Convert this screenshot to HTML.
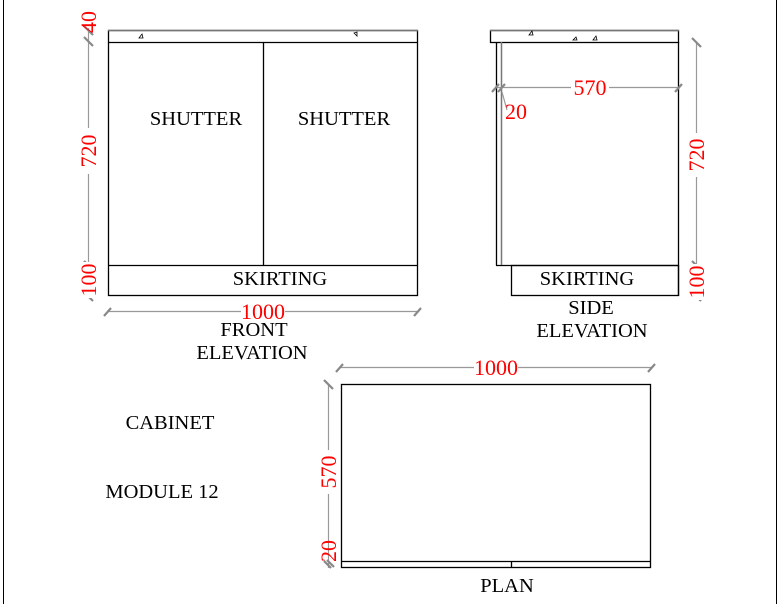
<!DOCTYPE html>
<html><head><style>
html,body{margin:0;padding:0;background:#fff;}
svg{display:block;}
text{font-family:"Liberation Serif","Times New Roman",serif;}
.k{fill:#000;font-size:20.5px;}
.r{fill:#f00;font-size:22px;}
</style></head><body>
<svg width="779" height="604" viewBox="0 0 779 604" xmlns="http://www.w3.org/2000/svg">
<rect x="0" y="0" width="779" height="604" fill="#fff"/>
<line x1="3.5" y1="0" x2="3.5" y2="604" stroke="#000" stroke-width="1"/>
<line x1="776.5" y1="0" x2="776.5" y2="604" stroke="#000" stroke-width="1"/>

<!-- FRONT -->
<g stroke="#000" stroke-width="1.3" fill="none">
<rect x="108.5" y="30.5" width="309" height="265"/>
<line x1="108" y1="42.5" x2="418" y2="42.5"/>
<line x1="263.5" y1="42" x2="263.5" y2="265"/>
<line x1="108" y1="265.5" x2="418" y2="265.5"/>
</g>
<line x1="108" y1="30.5" x2="418" y2="30.5" stroke="#777" stroke-width="1.5"/>
<path d="M139 38 l3 -4 l1 4 z M354 33 l3 3 l0 -4 z" stroke="#000" stroke-width="0.8" fill="none"/>
<text class="k" x="196" y="125" text-anchor="middle">SHUTTER</text>
<text class="k" x="344" y="125" text-anchor="middle">SHUTTER</text>
<text class="k" x="280" y="285" text-anchor="middle">SKIRTING</text>
<text class="k" x="254" y="336" text-anchor="middle">FRONT</text>
<text class="k" x="252" y="359" text-anchor="middle">ELEVATION</text>

<g stroke="#999" stroke-width="1.2">
<line x1="88.5" y1="28" x2="88.5" y2="298"/>
<line x1="107" y1="311.5" x2="417" y2="311.5"/>
</g>
<g stroke="#888" stroke-width="2.2">
<line x1="84" y1="26" x2="93" y2="35"/><line x1="84" y1="37" x2="93" y2="46"/>
<line x1="84" y1="261" x2="93" y2="270"/><line x1="84" y1="292" x2="93" y2="301"/>
<line x1="104" y1="316" x2="111" y2="308"/><line x1="414" y1="316" x2="421" y2="308"/>
</g>
<rect x="241" y="302" width="44" height="18" fill="#fff"/>
<text class="r" x="263" y="319" text-anchor="middle">1000</text>
<rect x="80" y="128" width="18" height="46" fill="#fff"/>
<text class="r" transform="translate(96,151) rotate(-90)" text-anchor="middle">720</text>
<text class="r" transform="translate(96,22) rotate(-90)" text-anchor="middle">40</text>
<rect x="80" y="262" width="18" height="36" fill="#fff"/>
<text class="r" transform="translate(96,280) rotate(-90)" text-anchor="middle">100</text>

<!-- SIDE -->
<g stroke="#000" stroke-width="1.3" fill="none">
<rect x="490.5" y="30.5" width="188" height="12"/>
<line x1="496.5" y1="42" x2="496.5" y2="265.5"/>
<line x1="678.5" y1="42" x2="678.5" y2="296"/>
<line x1="496" y1="265.5" x2="679" y2="265.5"/>
<rect x="511.5" y="265.5" width="167" height="30"/>
</g>
<line x1="501.5" y1="42" x2="501.5" y2="265" stroke="#777" stroke-width="1.5"/>
<line x1="490" y1="30.5" x2="679" y2="30.5" stroke="#777" stroke-width="1.5"/>
<path d="M529 35 l3 -4 l1 4 z M573 40 l3 -3 l1 3 z M593 40 l3 -4 l1 4 z" stroke="#000" stroke-width="0.8" fill="none"/>
<text class="k" x="587" y="285" text-anchor="middle">SKIRTING</text>
<text class="k" x="591" y="314" text-anchor="middle">SIDE</text>
<text class="k" x="592" y="337" text-anchor="middle">ELEVATION</text>

<g stroke="#999" stroke-width="1.2">
<line x1="495" y1="87.5" x2="680" y2="87.5"/>
<line x1="696.5" y1="42" x2="696.5" y2="298"/>
<line x1="502" y1="92" x2="507" y2="110"/>
</g>
<g stroke="#888" stroke-width="2.2">
<line x1="492" y1="92" x2="499" y2="84"/><line x1="498" y1="92" x2="505" y2="84"/>
<line x1="675" y1="92" x2="682" y2="84"/>
<line x1="692" y1="38" x2="701" y2="47"/>
<line x1="692" y1="261" x2="701" y2="270"/><line x1="692" y1="292" x2="701" y2="301"/>
</g>
<rect x="571" y="78" width="38" height="18" fill="#fff"/>
<text class="r" x="590" y="95" text-anchor="middle">570</text>
<text class="r" x="505" y="119">20</text>
<rect x="688" y="133" width="18" height="44" fill="#fff"/>
<text class="r" transform="translate(704,155) rotate(-90)" text-anchor="middle">720</text>
<rect x="688" y="264" width="18" height="36" fill="#fff"/>
<text class="r" transform="translate(704,282) rotate(-90)" text-anchor="middle">100</text>

<!-- PLAN -->
<g stroke="#000" stroke-width="1.3" fill="none">
<rect x="341.5" y="384.5" width="309" height="183"/>
<line x1="341" y1="561.5" x2="651" y2="561.5"/>
<line x1="511.5" y1="561" x2="511.5" y2="567"/>
</g>
<g stroke="#999" stroke-width="1.2">
<line x1="340" y1="367.5" x2="652" y2="367.5"/>
<line x1="328.5" y1="384" x2="328.5" y2="568"/>
</g>
<g stroke="#888" stroke-width="2.2">
<line x1="336" y1="372" x2="343" y2="364"/><line x1="648" y1="372" x2="655" y2="364"/>
<line x1="324" y1="380" x2="333" y2="389"/>
<line x1="324" y1="561" x2="331" y2="568"/><line x1="327" y1="560" x2="334" y2="567"/>
</g>
<rect x="474" y="358" width="44" height="18" fill="#fff"/>
<text class="r" x="496" y="375" text-anchor="middle">1000</text>
<rect x="320" y="450" width="18" height="44" fill="#fff"/>
<text class="r" transform="translate(336,472) rotate(-90)" text-anchor="middle">570</text>
<text class="r" transform="translate(336,551) rotate(-90)" text-anchor="middle">20</text>
<text class="k" x="507" y="592" text-anchor="middle">PLAN</text>

<text class="k" x="170" y="429" text-anchor="middle">CABINET</text>
<text class="k" x="162" y="498" text-anchor="middle">MODULE 12</text>
</svg>
</body></html>
